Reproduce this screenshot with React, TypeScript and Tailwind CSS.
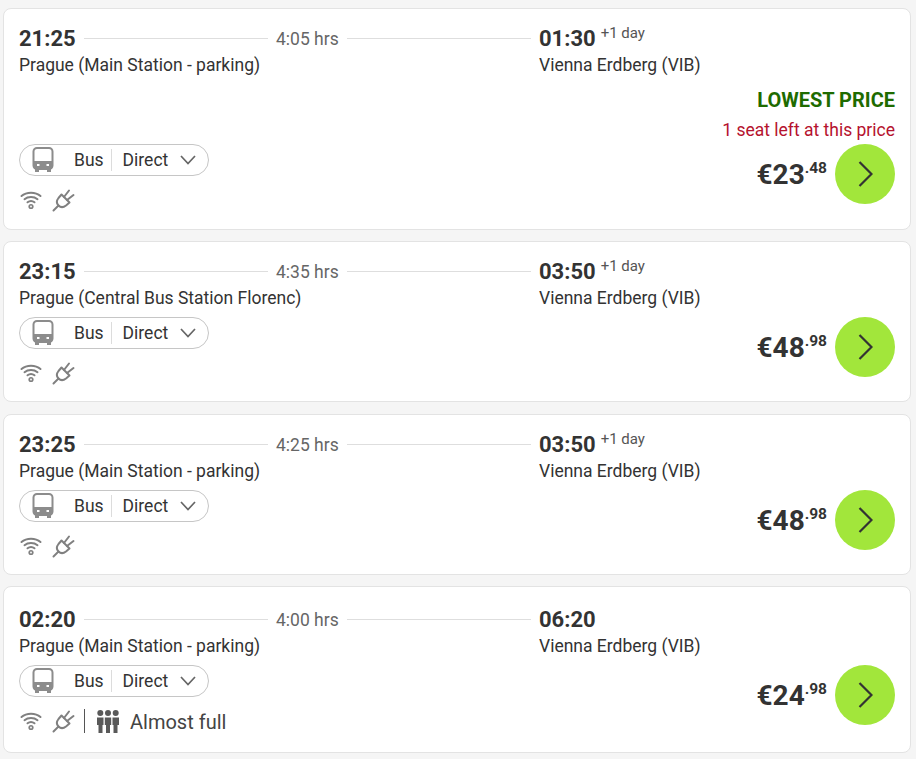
type Trip = {
  dep: string;
  from: string;
  dur: string;
  arr: string;
  nextDay?: boolean;
  euros: string;
  cents: string;
  lowest?: boolean;
  almostFull?: boolean;
};

const trips: Trip[] = [
  { dep: "21:25", from: "Prague (Main Station - parking)", dur: "4:05 hrs", arr: "01:30", nextDay: true, euros: "€23", cents: ".48", lowest: true },
  { dep: "23:15", from: "Prague (Central Bus Station Florenc)", dur: "4:35 hrs", arr: "03:50", nextDay: true, euros: "€48", cents: ".98" },
  { dep: "23:25", from: "Prague (Main Station - parking)", dur: "4:25 hrs", arr: "03:50", nextDay: true, euros: "€48", cents: ".98" },
  { dep: "02:20", from: "Prague (Main Station - parking)", dur: "4:00 hrs", arr: "06:20", euros: "€24", cents: ".98", almostFull: true },
];

function BusIcon() {
  return (
    <svg width="22" height="26" viewBox="0 0 22 26" fill="none" className="shrink-0">
      <rect x="1.5" y="1" width="19" height="21" rx="3.5" stroke="#8c8c8c" strokeWidth="2" />
      <path d="M1.5 14h19v5a3 3 0 0 1-3 3h-13a3 3 0 0 1-3-3z" fill="#8c8c8c" />
      <rect x="3" y="22" width="4" height="3" fill="#8c8c8c" />
      <rect x="15" y="22" width="4" height="3" fill="#8c8c8c" />
      <rect x="5" y="17" width="2.5" height="2" fill="#fff" />
      <rect x="14.5" y="17" width="2.5" height="2" fill="#fff" />
    </svg>
  );
}

function WifiIcon() {
  return (
    <svg width="22" height="20" viewBox="0 0 22 20" fill="none" stroke="#808080" strokeWidth="2" strokeLinecap="round">
      <path d="M1.5 6C6.5 1.5 15.5 1.5 20.5 6" />
      <path d="M4.5 9.200C8 6.200 14 6.200 17.500 9.200" />
      <path d="M7.500 12.300C9.500 10.800 12.500 10.800 14.500 12.300" />
      <circle cx="11" cy="16.500" r="2.600" fill="#808080" stroke="none" />
      <circle cx="11" cy="16.500" r="0.900" fill="#fff" stroke="none" />
    </svg>
  );
}

function PlugIcon() {
  return (
    <svg width="24" height="24" viewBox="0 0 24 24" fill="none" stroke="#808080" strokeWidth="2" strokeLinecap="round" strokeLinejoin="round">
      <path d="M1.500 22.500 6.500 17.500" />
      <path d="M9.500 6.500 17.500 14.500 14 17.500C11.500 19.500 8.500 19.500 6.500 17.500 4.500 15.500 4.500 12.500 6.500 10z" />
      <path d="M12 9 17 2.500" />
      <path d="M15 12 21.500 7" />
    </svg>
  );
}

function PeopleIcon() {
  return (
    <svg width="22" height="23" viewBox="0 0 22 23" fill="#595959">
      <circle cx="3.300" cy="3" r="3" />
      <circle cx="11" cy="3" r="3" />
      <circle cx="18.700" cy="3" r="3" />
      <path d="M0 7.500h6.500v7.500H5.500v8H1.500v-8H0z" />
      <path d="M7.800 7.500h6.400v7.500h-1.200v8H9v-8H7.800z" />
      <path d="M15.500 7.500H22v7.500h-1.500v8h-4v-8h-1z" />
    </svg>
  );
}

function PillChevron() {
  return (
    <svg width="16" height="10" viewBox="0 0 16 10" fill="none" stroke="#666" strokeWidth="1.7" className="ml-[12px]">
      <path d="M1 1 8 8.500 15 1" />
    </svg>
  );
}

function NextChevron() {
  return (
    <svg width="15" height="26" viewBox="0 0 15 26" fill="none" stroke="#333" strokeWidth="2.200">
      <path d="M1.500 1 13.500 13 1.500 25" />
    </svg>
  );
}

function TripCard({ trip }: { trip: Trip }) {
  const padding = trip.almostFull
    ? "pt-[17px] pb-[17.5px]"
    : trip.lowest
      ? "pt-[14px] pb-[15.9px]"
      : "pt-[14px] pb-[15px]";

  return (
    <div className={`rounded-lg border border-[#e3e3e3] bg-white px-[15px] ${padding}`}>
      {/* Times and stations */}
      <div className="flex">
        <div className="w-[512px] shrink-0">
          <div className="flex items-center h-[31px]">
            <span className="text-[22px] font-bold text-[#333]">{trip.dep}</span>
            <span className="ml-[8px] flex-1 h-px bg-[#dedede]" />
            <span className="mx-[8px] pt-[1px] text-[17.5px] text-[#666]">{trip.dur}</span>
            <span className="flex-1 h-px bg-[#dedede]" />
          </div>
          <div className="text-[17.5px] leading-[22px] text-[#333]">{trip.from}</div>
        </div>
        <div className="ml-[8px]">
          <div className="flex items-center h-[31px]">
            <span className="text-[22px] font-bold text-[#333]">{trip.arr}</span>
            {trip.nextDay && <span className="ml-[5px] -mt-[11px] text-[15px] text-[#555]">+1 day</span>}
          </div>
          <div className="text-[17.5px] leading-[22px] text-[#333]">Vienna Erdberg (VIB)</div>
        </div>
      </div>

      {trip.lowest && (
        <div className="text-right mt-[9px] -mb-[1px]">
          <div className="text-[20px] leading-[30px] font-bold text-[#1e6b00]">LOWEST PRICE</div>
          <div className="text-[17.5px] leading-[30px] text-[#b5122e]">1 seat left at this price</div>
        </div>
      )}

      {/* Details and price */}
      <div className={`flex items-start justify-between ${trip.lowest ? "mt-0" : "mt-[8px]"}`}>
        <div>
          <div className="flex items-center w-[190px] h-[32px] rounded-full border border-[#c6c6c6] pl-[12px]">
            <BusIcon />
            <span className="ml-[20px] text-[17.5px] text-[#333]">Bus</span>
            <span className="ml-[7px] mr-[11px] h-[22px] w-px bg-[#dcdcdc]" />
            <span className="text-[17.5px] text-[#333]">Direct</span>
            <PillChevron />
          </div>
          <div className="flex items-center mt-[11px] h-[26px] pl-[1px]">
            <WifiIcon />
            <span className="ml-[10px]"><PlugIcon /></span>
            {trip.almostFull && (
              <>
                <span className="ml-[8px] h-[24px] w-px bg-[#555]" />
                <span className="ml-[12px]"><PeopleIcon /></span>
                <span className="ml-[11px] pt-[2px] text-[20px] text-[#444]">Almost full</span>
              </>
            )}
          </div>
        </div>
        <div className="flex items-center">
          <div className="flex items-start pt-[2px] text-[#333] font-bold mr-[8px]">
            <span className="text-[28px] leading-[36px]">{trip.euros}</span>
            <span className="text-[15.5px] leading-[23px]">{trip.cents}</span>
          </div>
          <div className="flex items-center justify-center w-[60px] h-[60px] rounded-full bg-[#a2e63b]">
            <NextChevron />
          </div>
        </div>
      </div>
    </div>
  );
}

export default function App() {
  return (
    <div className="min-h-[759px] bg-[#f5f5f5] pt-[8px] pl-[3px] pr-[5px] flex flex-col gap-[11.5px] font-['Roboto',sans-serif]">
      {trips.map((t) => (
        <TripCard key={t.dep} trip={t} />
      ))}
    </div>
  );
}
